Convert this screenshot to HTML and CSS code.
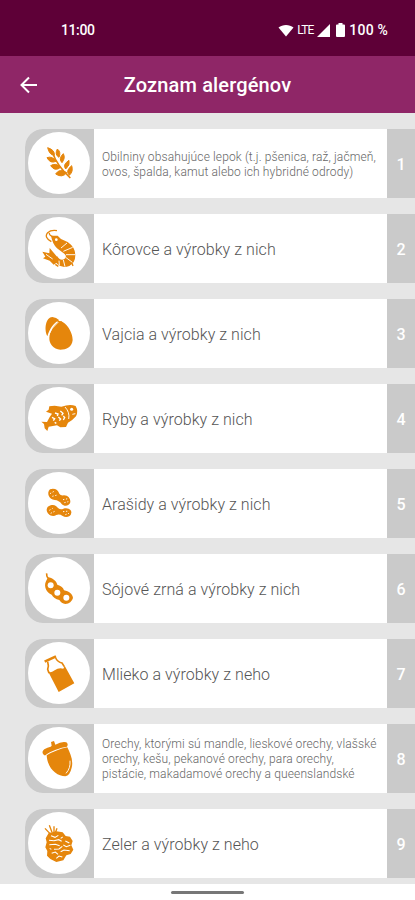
FILE: index.html
```html
<!DOCTYPE html>
<html lang="sk">
<head>
    <meta charset="UTF-8">
    <meta name="viewport" content="width=device-width, initial-scale=1.0">
    <title>Zoznam alergénov</title>
    <link rel="stylesheet" href="styles.css">
</head>
<body>
    <div class="status-bar">
        <span class="time">11:00</span>
        <div class="status-icons">
            <svg class="wifi" viewBox="0 0 16 13"><path d="M0.5 3.6C4.500 0 11.500 0 15.500 3.600L8 12.600Z"/></svg>
            <span class="network">LTE</span>
            <svg class="signal" viewBox="0 0 13 13"><path d="M13 0V13H0Z"/></svg>
            <svg class="battery" viewBox="0 0 9 14"><path d="M2.500 0H6.500V1.500H8Q9 1.500 9 2.500V13Q9 14 8 14H1Q0 14 0 13V2.500Q0 1.500 1 1.500H2.500Z"/></svg>
            <span class="percent">100 %</span>
        </div>
    </div>
    <header class="header">
        <svg class="back" viewBox="0 0 18 18"><path d="M17 9H2M9 1.500L1.500 9L9 16.500"/></svg>
        <h1>Zoznam alergénov</h1>
    </header>

    <ul class="allergens">
        <li class="allergen">
            <div class="badge">
                <!-- Obilniny -->
                <svg viewBox="39 36 186 186">
                    <path class="line" d="M112 97Q126 138 166 174"/>
                    <path class="leaves" d="M98 83Q120 90 118 106Q103 105 98 83ZM127 87Q139 96 132 112Q118 104 127 87ZM96 113Q112 107 123 124Q106 132 96 113ZM145 101Q152 114 141 128Q129 116 145 101ZM107 137Q123 127 137 142Q120 156 107 137ZM162 121Q166 136 152 147Q142 134 162 121ZM122 162Q134 143 155 158Q142 175 122 162ZM170 137Q176 154 163 166Q150 153 170 137Z"/>
                </svg>
            </div>
            <p class="name small">Obilniny obsahujúce lepok (t.j. pšenica, raž, jačmeň,<br>ovos, špalda, kamut alebo ich hybridné odrody)</p>
            <span class="number">1</span>
        </li>
        <li class="allergen">
            <div class="badge">
                <!-- Krevety -->
                <svg viewBox="39 291 186 186">
                    <path d="M108 347L128 347L138 357L158 366Q181 382 181 405Q181 428 163 438Q142 446 128 433L116 421L126 408Q134 422 147 418Q158 410 148 401L126 385Q112 370 108 347Z"/>
                    <path d="M126 410L104 384L103 400L82 395L91 410L84 415L104 422L116 434L128 426Z"/>
                    <path class="line thin" d="M109 365Q86 352 98 338Q108 329 126 332M116 351Q102 347 103 339M121 433L130 439M171 430L174 438"/>
                    <path class="cut fine" d="M138 384L156 369M145 394L173 382M153 404L181 404M152 412L172 427M145 420L150 440M93 403L113 417M132 422L133 435"/>
                    <circle class="hole" cx="124" cy="359" r="4"/>
                </svg>
            </div>
            <p class="name">Kôrovce a výrobky z nich</p>
            <span class="number">2</span>
        </li>
        <li class="allergen">
            <div class="badge">
                <!-- Vajcia -->
                <svg viewBox="39 36 186 186">
                    <path d="M97 139C86 116 93 82 112 81Q124 82 133 91C116 98 103 119 97 139Z"/>
                    <path d="M137 95C153 95 174 127 173 150C171 171 154 179 136 179C115 177 102 161 103 143C104 124 119 95 137 95Z"/>
                    <path d="M128 92L140 94L146 100L124 106Z"/>
                    <path class="cut fine" d="M99 139Q109 112 130 96"/>
                </svg>
            </div>
            <p class="name">Vajcia a výrobky z nich</p>
            <span class="number">3</span>
        </li>
        <li class="allergen">
            <div class="badge">
                <!-- Ryby -->
                <svg viewBox="39 291 186 186">
                    <path d="M79 395L96 396Q104 379 111 371L93 365L101 359L103 349L119 347L139 350Q165 341 182 348Q191 364 183 379Q174 390 159 398L153 411L136 412L126 406L101 410L97 423L89 415L87 402Z"/>
                    <path class="cut fine" d="M150 351Q165 367 161 387"/>
                    <path class="cut" d="M120 369L129 372L127 378M136 363L144 370L140 376M111 382L119 386L115 392M130 381L137 387L133 392M145 378L149 383L145 390M119 397L124 400"/>
                    <circle class="hole" cx="170" cy="358" r="4.500"/>
                    <path class="cut fine" d="M172 373L181 371"/>
                </svg>
            </div>
            <p class="name">Ryby a výrobky z nich</p>
            <span class="number">4</span>
        </li>
        <li class="allergen">
            <div class="badge">
                <!-- Arašidy -->
                <svg viewBox="39 36 186 186">
                    <path d="M105 88C118 83 130 90 133 101Q137 108 147 106C159 106 167 116 166 127C163 138 148 141 140 132Q132 121 119 120C103 120 93 99 105 88Z"/>
                    <path d="M107 136C118 132 125 139 129 144Q137 150 145 146C158 141 170 149 169 158C168 171 152 174 143 168Q133 161 124 165C111 173 95 162 95 149Q96 139 107 136Z"/>
                    <path class="cut fine dots" d="M105 101L117 94M112 109L127 105M144 119L159 116M148 128L160 125M103 151L113 145M107 160L121 153M144 155L162 153M151 164L162 160"/>
                </svg>
            </div>
            <p class="name">Arašidy a výrobky z nich</p>
            <span class="number">5</span>
        </li>
        <li class="allergen">
            <div class="badge">
                <!-- Sója -->
                <svg viewBox="39 291 186 186">
                    <path class="line" d="M95 340Q94 348 99 355"/>
                    <path d="M99 352C112 354 124 362 127 374Q144 379 147 391C162 394 173 402 174 414Q169 431 151 432Q139 431 133 420Q116 416 110 404C95 399 85 379 93 364Z"/>
                    <circle class="hole" cx="107" cy="376" r="9"/>
                    <circle class="hole" cx="127" cy="398" r="9"/>
                    <circle class="hole" cx="154" cy="413" r="9"/>
                </svg>
            </div>
            <p class="name">Sójové zrná a výrobky z nich</p>
            <span class="number">6</span>
        </li>
        <li class="allergen">
            <div class="badge">
                <!-- Mlieko -->
                <svg viewBox="39 36 186 186">
                    <path class="line thick" d="M89 95L123 79"/>
                    <path class="line" d="M98 95Q102 107 98 118L102 130M122 84Q128 96 141 99L148 110"/>
                    <path d="M99 124Q109 130 119 121Q131 112 145 116L149 107L178 160L131 186Z"/>
                </svg>
            </div>
            <p class="name">Mlieko a výrobky z neho</p>
            <span class="number">7</span>
        </li>
        <li class="allergen">
            <div class="badge">
                <!-- Orechy -->
                <svg viewBox="39 291 186 186">
                    <path d="M83 370C80 358 94 354 107 350L110 347L108 336L117 333L121 344Q139 334 154 337Q161 342 156 350C138 353 106 362 91 376Q86 377 83 370Z"/>
                    <path d="M95 376Q124 359 157 352C165 369 176 390 170 413Q165 436 151 439C126 438 98 418 95 376Z"/>
                    <path class="cut fine" d="M165 392Q167 415 153 430"/>
                </svg>
            </div>
            <p class="name small">Orechy, ktorými sú mandle, lieskové orechy, vlašské<br>orechy, kešu, pekanové orechy, para orechy,<br>pistácie, makadamové orechy a queenslandské</p>
            <span class="number">8</span>
        </li>
        <li class="allergen">
            <div class="badge">
                <!-- Zeler -->
                <svg viewBox="39 66 186 186">
                    <path class="line thin" d="M105 131L90 115M111 127L103 106M117 127V109M121 128L126 115"/>
                    <path d="M101 129L124 124L143 127L152 138L165 140L173 153L169 166L175 179L167 192L154 196L145 211L124 216L106 207L96 197L97 183L91 172L95 157L92 145Z"/>
                    <path class="cut narrow" d="M108 137L120 142L130 136M102 151L117 152L131 149L140 154M143 141L137 145M151 153L163 159M103 164L121 163L134 167M145 165L154 170L166 166M117 178L132 177L142 169M110 190L121 186L129 193M137 185L147 180L164 182M124 205L132 198L142 201M104 175L109 178"/>
                </svg>
            </div>
            <p class="name">Zeler a výrobky z neho</p>
            <span class="number">9</span>
        </li>
    </ul>

    <div class="nav-bar"><div class="handle"></div></div>
</body>
</html>
```
FILE: styles.css
```css
* {
    box-sizing: border-box;
}
body {
    margin: 0;
    height: 900px;
    display: flex;
    flex-direction: column;
    overflow: hidden;
    font-family: Roboto, sans-serif;
    background-color: #e6e6e6;
}
.status-bar {
    display: flex;
    justify-content: space-between;
    align-items: center;
    height: 56px;
    padding: 4px 27px 0 61px;
    background-color: #5e0037;
    color: white;
    flex-shrink: 0;
}
.time {
    font-size: 14px;
    font-weight: 500;
    letter-spacing: -0.4px;
}
.status-icons {
    display: flex;
    align-items: center;
    fill: white;
}
.wifi {
    width: 16px;
    height: 13px;
    margin-right: 3px;
}
.network {
    width: 20px;
    font-size: 12px;
    letter-spacing: -0.9px;
}
.signal {
    width: 13px;
    height: 13px;
    margin-right: 6px;
}
.battery {
    width: 9px;
    height: 14px;
    margin-right: 4px;
}
.percent {
    font-size: 14px;
    font-weight: 500;
    letter-spacing: 0.2px;
}
.header {
    display: flex;
    align-items: center;
    height: 57px;
    padding-left: 20px;
    background-color: #8f2667;
    color: white;
    flex-shrink: 0;
}
.back {
    width: 18px;
    height: 18px;
    fill: none;
    stroke: white;
    stroke-width: 2;
}
h1 {
    flex: 1;
    margin: 1px 38px 0 0;
    font-size: 20px;
    font-weight: 500;
    letter-spacing: 0.15px;
    text-align: center;
}
.allergens {
    display: flex;
    flex-direction: column;
    gap: 16px;
    height: 771px;
    margin: 0;
    padding: 16px 0 0 25px;
    list-style: none;
    overflow: hidden;
}
.allergen {
    display: flex;
    height: 69px;
    flex-shrink: 0;
    background-color: white;
    border-radius: 18px 0 0 18px;
    overflow: hidden;
}
.badge {
    width: 69px;
    padding: 3px;
    background-color: #cacaca;
}
.badge svg {
    display: block;
    width: 62px;
    height: 62px;
    border-radius: 50%;
    background-color: white;
    fill: #e5860c;
}
.badge .line {
    fill: none;
    stroke: #e5860c;
    stroke-width: 5;
}
.badge .thick {
    stroke-width: 8;
}
.badge .thin {
    stroke-width: 4;
}
.badge .leaves {
    stroke: #e5860c;
    stroke-width: 3;
    stroke-linejoin: round;
}
.badge .cut {
    fill: none;
    stroke: white;
    stroke-width: 4;
}
.badge .narrow {
    stroke-width: 3.2;
}
.badge .fine {
    stroke-width: 2.8;
}
.badge .dots {
    stroke-dasharray: 4 5;
}
.badge .hole {
    fill: white;
}
.name {
    display: flex;
    align-items: center;
    width: 293px;
    margin: 0;
    padding: 1px 0 0 8px;
    font-size: 16px;
    font-weight: 300;
    letter-spacing: 0.06px;
    color: #555;
    white-space: nowrap;
}
.small {
    display: block;
    align-self: center;
    padding-top: 2px;
    font-size: 12px;
    line-height: 14.7px;
    letter-spacing: 0.13px;
    color: #666;
}
.number {
    display: flex;
    align-items: center;
    justify-content: center;
    width: 28px;
    padding-top: 2px;
    background-color: #cacaca;
    color: white;
    font-size: 16px;
    font-weight: 500;
}
.nav-bar {
    display: flex;
    justify-content: center;
    height: 16px;
    padding-top: 7px;
    background-color: white;
}
.handle {
    width: 73px;
    height: 3px;
    border-radius: 2px;
    background-color: #777;
}
```
